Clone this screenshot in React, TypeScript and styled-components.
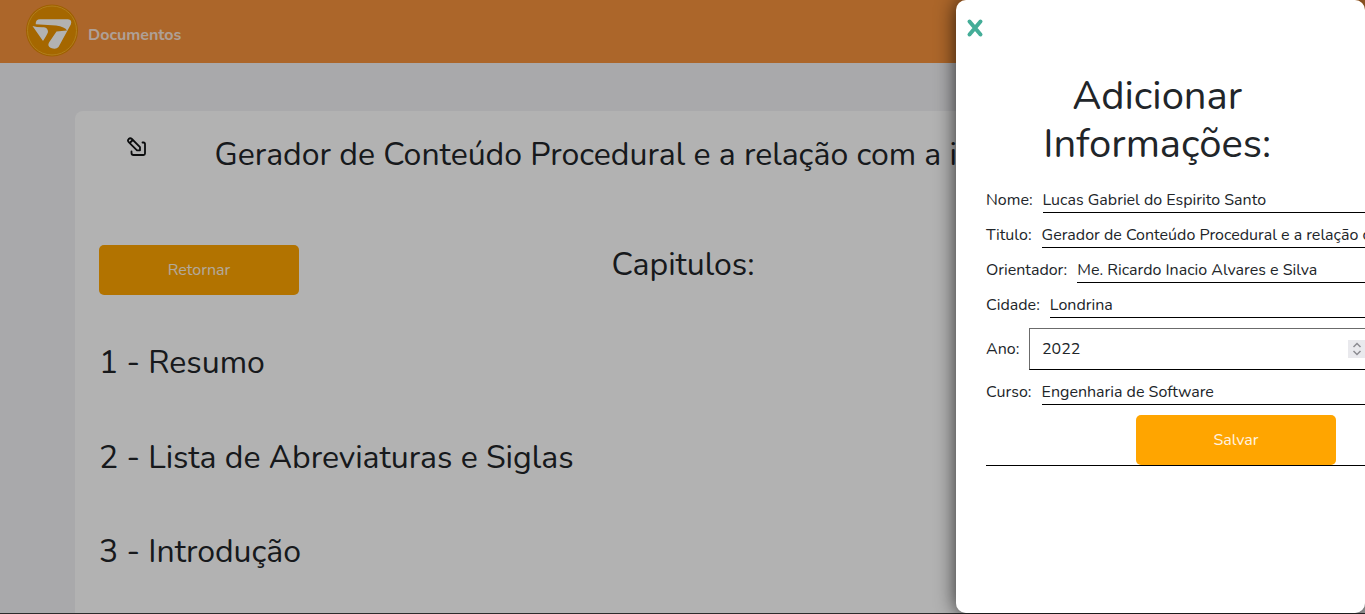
import React from 'react';
import styled, { createGlobalStyle } from 'styled-components';

const GlobalStyle = createGlobalStyle`
  *, *::before, *::after { box-sizing: border-box; }
  html, body { margin: 0; height: 100%; overflow: hidden; }
  body {
    font-family: Nunito, Lato, 'Open Sans', sans-serif;
    font-size: 16px;
    line-height: 24px;
    color: #212529;
    background: #f3f3f5;
  }
`;

const Screen = styled.div`
  position: relative;
  height: 614px;
  overflow: hidden;
`;

const Header = styled.header`
  display: flex;
  height: 63px;
  padding: 4px 25px;
  background: #f7923d;
`;

const Logo = styled.svg`
  width: 54px;
  height: 54px;
`;

const HeaderLink = styled.a`
  padding: 19px 0 0 9px;
  font-weight: 700;
  color: #fbe6d8;
`;

const Card = styled.main`
  margin: 48px 75px 0;
  height: 560px;
  padding: 25px 24px 0;
  border-radius: 8px;
  background: #fff;
`;

const CardTop = styled.div`
  display: flex;
  height: 109px;
  padding-left: 27px;
  white-space: nowrap;
`;

const EditIcon = styled.svg`
  width: 22px;
  height: 22px;
  margin-right: 66.6px;
`;

const Heading = styled.h2`
  margin: 0;
  font-size: 32px;
  font-weight: 400;
  line-height: 38px;
  white-space: nowrap;
`;

const ChapterBar = styled.div`
  display: grid;
  grid-template-columns: 200px 1fr 199px;
  justify-items: center;
  height: 99px;

  ${Heading} {
    padding-top: 1px;
  }
`;

const Button = styled.button`
  width: 200px;
  height: 50px;
  border: 0;
  border-radius: 5px;
  background: #ffa500;
  color: #fff3e0;
  font: inherit;
`;

const Chapters = styled.div`
  display: flex;
  flex-direction: column;
  gap: 56.5px;
`;

const Backdrop = styled.div`
  position: absolute;
  inset: 0;
  background: rgba(0, 0, 0, 0.3);
  border-bottom: 1px solid #2b2b2b;
`;

const Drawer = styled.aside`
  position: absolute;
  top: 0;
  right: 0;
  width: 409px;
  height: 613px;
  padding: 17px 0 0 30px;
  overflow: hidden;
  border-radius: 10px;
  background: #fff;
`;

const DrawerShadow = styled.div`
  position: absolute;
  top: 0;
  right: 0;
  width: 409px;
  height: 613px;
  border-radius: 10px;
  box-shadow: 0 0 20px rgba(0, 0, 0, 0.75);
`;

const CloseIcon = styled.svg`
  display: block;
  width: 18px;
  height: 20px;
  margin: 1px 0 34px -20px;
`;

const DrawerTitle = styled.h1`
  width: 342.4px;
  margin: 0 0 20px;
  padding: 0 50px;
  font-size: 40px;
  font-weight: 400;
  line-height: 48px;
  text-align: center;
`;

const Form = styled.div`
  display: flex;
  flex-direction: column;
  gap: 10px;
  width: 500px;
`;

const Field = styled.label<{ $label: number; $center?: boolean }>`
  display: grid;
  grid-template-columns: ${(p) => p.$label}px 1fr;
  align-items: ${(p) => (p.$center ? 'center' : 'start')};
  white-space: nowrap;
`;

const Value = styled.div`
  height: 25px;
  border-bottom: 1px solid #000;
`;

const NumberBox = styled.div`
  display: flex;
  align-items: center;
  justify-content: space-between;
  width: 350px;
  height: 42px;
  padding: 0 12px;
  border: 1px solid #6b6b6b;
  border-bottom-color: #000;
`;

const Spinner = styled.svg`
  width: 18px;
  height: 18px;
  background: #e9e9ed;
`;

const SaveRow = styled.div`
  display: flex;
  justify-content: center;
  height: 51px;
  border-bottom: 1px solid #000;
`;

type FieldData = { label: string; value: string; width: number };

const fields: FieldData[] = [
  { label: 'Nome:', value: 'Lucas Gabriel do Espirito Santo', width: 56.6 },
  { label: 'Titulo:', value: 'Gerador de Conteúdo Procedural e a relação com', width: 55.6 },
  { label: 'Orientador:', value: 'Me. Ricardo Inacio Alvares e Silva', width: 91.3 },
  { label: 'Cidade:', value: 'Londrina', width: 63.8 },
];

const course: FieldData = { label: 'Curso:', value: 'Engenharia de Software', width: 55.6 };

const TextField = ({ data }: { data: FieldData }) => (
  <Field $label={data.width}>
    <span>{data.label}</span>
    <Value>{data.value}</Value>
  </Field>
);

export default function App() {
  return (
    <Screen>
      <GlobalStyle />
      <Header>
        <Logo viewBox="0 0 54 54">
          <circle cx="27" cy="26.5" r="26" fill="#e48a00" />
          <circle cx="27" cy="26.5" r="24.5" fill="#ec9400" stroke="#ffb52a" strokeWidth="1" />
          <path d="M10.7 20.2 Q10.500 15.300 15 15.300 H43 Q47.500 15.500 45.800 20.500 L33.500 43 Q31 46 26 44 Q22 42 24 38.500 L31.500 27.500 L42 26.600 Q40 22.800 31 21.500 Z" fill="#fff" />
          <path d="M7.500 22 Q12 23.500 19 23.300 Q23 24 23 28 Q22.500 30 18 37 Z" fill="#fff" />
        </Logo>
        <HeaderLink>Documentos</HeaderLink>
      </Header>
      <Card>
        <CardTop>
          <EditIcon viewBox="0 0 22 22" fill="none" stroke="#101214" strokeWidth="1.8" strokeLinecap="round" strokeLinejoin="round">
            <path d="M5.500 15.500 V17 Q5.500 19 7.500 19 H17.500 Q19 19 19 17.500 V8 Q19 6.500 17.500 6.500 H16.500" />
            <path d="M2.700 3 Q4.200 1.500 5.900 3 L14 11.200 V14.300 H11 L2.700 6.200 Q1.200 4.600 2.700 3 Z M3.700 7 L6.800 4" />
          </EditIcon>
          <Heading>Gerador de Conteúdo Procedural e a relação com a i</Heading>
        </CardTop>
        <ChapterBar>
          <Button>Retornar</Button>
          <Heading>Capitulos:</Heading>
        </ChapterBar>
        <Chapters>
          <Heading>1 - Resumo</Heading>
          <Heading>2 - Lista de Abreviaturas e Siglas</Heading>
          <Heading>3 - Introdução</Heading>
        </Chapters>
      </Card>
      <Backdrop />
      <DrawerShadow />
      <Drawer>
        <CloseIcon viewBox="0 0 18 20" stroke="#44ad98" strokeWidth="4" strokeLinecap="round">
          <path d="M3.500 3.500 L14.500 16.500 M14.500 3.500 L3.500 16.500" />
        </CloseIcon>
        <DrawerTitle>Adicionar Informações:</DrawerTitle>
        <Form>
          {fields.map((f) => <TextField key={f.label} data={f} />)}
          <Field $label={43} $center>
            <span>Ano:</span>
            <NumberBox>
              <span>2022</span>
              <Spinner viewBox="0 0 18 18" fill="none" stroke="#8c8c92" strokeWidth="1.500">
                <path d="M5.500 7 L9 3.500 L12.500 7 M5.500 11 L9 14.500 L12.500 11" />
              </Spinner>
            </NumberBox>
          </Field>
          <TextField data={course} />
          <SaveRow><Button>Salvar</Button></SaveRow>
        </Form>
      </Drawer>
    </Screen>
  );
}
